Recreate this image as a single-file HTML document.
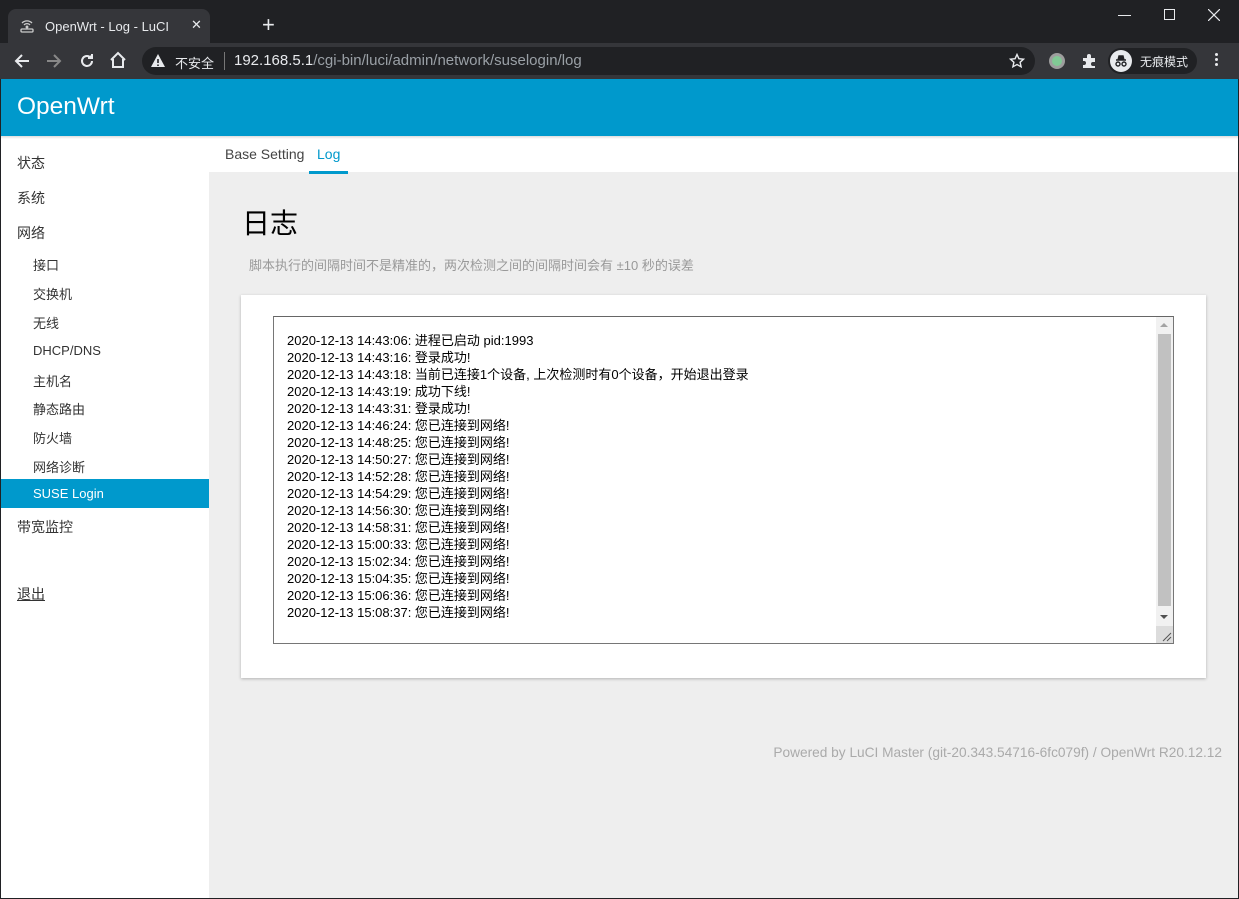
<!DOCTYPE html>
<html><head><meta charset="utf-8"><style>
*{margin:0;padding:0;box-sizing:border-box}
body{width:1239px;height:899px;overflow:hidden;background:#202124;position:relative;font-family:"Liberation Sans","Noto Sans CJK SC",sans-serif}
.a{position:absolute}
.side a{position:absolute;color:#333;font-size:13px;text-decoration:none;white-space:nowrap}
.log{font-size:13px;line-height:17px;color:#000}
</style></head><body>
<!-- tab bar -->
<div class="a" style="left:8px;top:9px;width:202px;height:34px;background:#35363a;border-radius:8px 8px 0 0"></div>
<svg class="a" style="left:19px;top:17px" width="16" height="16" viewBox="0 0 16 16" fill="none" stroke="#ccc" stroke-width="1.3"><path d="M3 6a7 7 0 0 1 10 0M5 8a4 4 0 0 1 6 0"/><circle cx="8" cy="10" r="0.8" fill="#ccc"/><rect x="2" y="12" width="12" height="3" rx="1"/></svg>
<div class="a" style="left:45px;top:19px;color:#e8eaed;font-size:13px">OpenWrt - Log - LuCI</div>
<div class="a" style="left:191px;top:17px;color:#e8eaed;font-size:13px">✕</div>
<div class="a" style="left:262px;top:12px;color:#e8eaed;font-size:22px;font-weight:300">+</div>
<div class="a" style="left:1118px;top:15px;width:13px;height:1px;background:#e8eaed"></div>
<div class="a" style="left:1164px;top:9px;width:11px;height:11px;border:1px solid #e8eaed"></div>
<svg class="a" style="left:1208px;top:9px" width="12" height="12" viewBox="0 0 12 12" stroke="#e8eaed" stroke-width="1.2"><path d="M0 0L12 12M12 0L0 12"/></svg>
<!-- toolbar -->
<div class="a" style="left:0;top:43px;width:1239px;height:36px;background:#35363a"></div>
<svg class="a" style="left:12px;top:51px" width="20" height="20" viewBox="0 0 20 20" fill="none" stroke="#e8eaed" stroke-width="2"><path d="M17 10H4M10 4l-6 6 6 6"/></svg>
<svg class="a" style="left:44px;top:51px" width="20" height="20" viewBox="0 0 20 20" fill="none" stroke="#888" stroke-width="2"><path d="M3 10h13M10 4l6 6-6 6"/></svg>
<svg class="a" style="left:77px;top:51px" width="20" height="20" viewBox="0 0 20 20" fill="none" stroke="#e8eaed" stroke-width="2"><path d="M15 10a5 5 0 1 1-2-4"/><path d="M15 3v4h-4" fill="#e8eaed"/></svg>
<svg class="a" style="left:108px;top:50px" width="20" height="20" viewBox="0 0 20 20" fill="none" stroke="#e8eaed" stroke-width="2"><path d="M3 10l7-7 7 7M5 9v8h10V9"/></svg>
<div class="a" style="left:142px;top:47px;width:893px;height:28px;background:#202124;border-radius:14px"></div>
<svg class="a" style="left:150px;top:53px" width="16" height="16" viewBox="0 0 16 16"><path d="M8 1L15 14H1z" fill="#e8eaed"/><path d="M8 6v4M8 11.5v1.5" stroke="#202124" stroke-width="1.6"/></svg>
<div class="a" style="left:175px;top:53px;color:#e8eaed;font-size:13px">不安全</div>
<div class="a" style="left:224px;top:52px;width:1px;height:18px;background:#777"></div>
<div class="a" style="left:234px;top:52px;font-size:15px;color:#9aa0a6;white-space:nowrap"><span style="color:#e8eaed">192.168.5.1</span>/cgi-bin/luci/admin/network/suselogin/log</div>
<svg class="a" style="left:1009px;top:53px" width="16" height="16" viewBox="0 0 16 16" fill="none" stroke="#e8eaed" stroke-width="1.4"><path d="M8 1.5l1.9 4.2 4.6.5-3.4 3.1 1 4.5L8 11.5l-4.1 2.3 1-4.5L1.5 6.2l4.6-.5z"/></svg>
<div class="a" style="left:1049px;top:53px;width:16px;height:16px;border-radius:50%;background:#9e9e9e"></div>
<div class="a" style="left:1052px;top:56px;width:10px;height:10px;border-radius:50%;background:#81c995"></div>
<svg class="a" style="left:1081px;top:53px" width="16" height="16" viewBox="0 0 16 16"><path d="M2 5h4V3a2 2 0 0 1 4 0v2h4v4h-2a2 2 0 0 0 0 4h2v2H2v-3h1a2 2 0 0 0 0-4H2z" fill="#e8eaed"/></svg>
<div class="a" style="left:1108px;top:48px;width:89px;height:26px;border-radius:13px;background:#202124"></div>
<div class="a" style="left:1110px;top:50px;width:22px;height:22px;border-radius:50%;background:#e8eaed"></div>
<svg class="a" style="left:1112px;top:52px" width="18" height="18" viewBox="0 0 18 18" fill="none" stroke="#202124" stroke-width="1.4"><path d="M4 8h10M6 8l1-4h4l1 4" fill="#202124"/><circle cx="6" cy="12" r="2"/><circle cx="12" cy="12" r="2"/></svg>
<div class="a" style="left:1140px;top:53px;color:#e8eaed;font-size:12px">无痕模式</div>
<div class="a" style="left:1215px;top:53px;width:3px;height:3px;background:#e8eaed;border-radius:50%;box-shadow:0 5px 0 #e8eaed,0 10px 0 #e8eaed"></div>
<!-- page -->
<div class="a" style="left:1px;top:79px;width:1237px;height:819px;background:#eee"></div>
<div class="a" style="left:1px;top:79px;width:1237px;height:57px;background:#0099cc"></div>
<div class="a" style="left:17px;top:93px;color:#fff;font-size:24.5px">OpenWrt</div>
<div class="a" style="left:1px;top:136px;width:208px;height:762px;background:#fff"></div>
<div class="a" style="left:209px;top:136px;width:1029px;height:36px;background:#fff"></div>
<div class="a" style="left:1px;top:136px;width:1237px;height:3px;background:linear-gradient(#ddd,#fff0)"></div>
<div class="a" style="left:225px;top:146px;font-size:14px;color:#444">Base Setting</div>
<div class="a" style="left:317px;top:146px;font-size:14px;color:#0099cc">Log</div>
<div class="a" style="left:309px;top:171px;width:39px;height:3px;background:#0099cc"></div>
<div class="side">
<a style="left:17px;top:153px;font-size:14px">状态</a>
<a style="left:17px;top:188px;font-size:14px">系统</a>
<a style="left:17px;top:223px;font-size:14px">网络</a>
<a style="left:33px;top:255px">接口</a>
<a style="left:33px;top:284px">交换机</a>
<a style="left:33px;top:313px">无线</a>
<a style="left:33px;top:343px">DHCP/DNS</a>
<a style="left:33px;top:371px">主机名</a>
<a style="left:33px;top:399px">静态路由</a>
<a style="left:33px;top:428px">防火墙</a>
<a style="left:33px;top:457px">网络诊断</a>
</div>
<div class="a" style="left:1px;top:479px;width:208px;height:29px;background:#0099cc"></div>
<div class="a" style="left:33px;top:486px;color:#fff;font-size:13px">SUSE Login</div>
<div class="side"><a style="left:17px;top:517px;font-size:14px">带宽监控</a>
<a style="left:17px;top:584px;font-size:14px;text-decoration:underline">退出</a></div>
<div class="a" style="left:242px;top:202px;font-size:28px;color:#000">日志</div>
<div class="a" style="left:249px;top:255px;font-size:13px;color:#999">脚本执行的间隔时间不是精准的，两次检测之间的间隔时间会有 ±10 秒的误差</div>
<div class="a" style="left:241px;top:295px;width:965px;height:383px;background:#fff;box-shadow:0 1px 3px rgba(0,0,0,.25)"></div>
<div class="a" style="left:273px;top:316px;width:901px;height:328px;border:1px solid #767676;border-top-color:#666;background:#fff"></div>
<div class="a" style="left:1156px;top:317px;width:17px;height:326px;background:#f1f1f1"></div>
<div class="a" style="left:1158px;top:334px;width:13px;height:272px;background:#c1c1c1"></div>
<div class="a" style="left:1160px;top:323px;width:0;height:0;border:4px solid transparent;border-bottom:4px solid #a3a3a3;border-top:0"></div>
<div class="a" style="left:1160px;top:615px;width:0;height:0;border:4px solid transparent;border-top:4px solid #505050;border-bottom:0"></div>
<div class="a" style="left:1156px;top:626px;width:17px;height:17px;background:#dcdcdc"></div>
<svg class="a" style="left:1162px;top:632px" width="10" height="10" stroke="#555" stroke-width="1"><path d="M9 1L1 9M9 5L5 9"/></svg>
<div class="a log" style="left:287px;top:332px">
2020-12-13 14:43:06: 进程已启动 pid:1993<br>2020-12-13 14:43:16: 登录成功!<br>2020-12-13 14:43:18: 当前已连接1个设备, 上次检测时有0个设备，开始退出登录<br>2020-12-13 14:43:19: 成功下线!<br>2020-12-13 14:43:31: 登录成功!<br>2020-12-13 14:46:24: 您已连接到网络!<br>2020-12-13 14:48:25: 您已连接到网络!<br>2020-12-13 14:50:27: 您已连接到网络!<br>2020-12-13 14:52:28: 您已连接到网络!<br>2020-12-13 14:54:29: 您已连接到网络!<br>2020-12-13 14:56:30: 您已连接到网络!<br>2020-12-13 14:58:31: 您已连接到网络!<br>2020-12-13 15:00:33: 您已连接到网络!<br>2020-12-13 15:02:34: 您已连接到网络!<br>2020-12-13 15:04:35: 您已连接到网络!<br>2020-12-13 15:06:36: 您已连接到网络!<br>2020-12-13 15:08:37: 您已连接到网络!</div>
<div class="a" style="right:17px;top:745px;font-size:13.7px;color:#aaa;white-space:nowrap">Powered by LuCI Master (git-20.343.54716-6fc079f) / OpenWrt R20.12.12</div>
</body></html>
